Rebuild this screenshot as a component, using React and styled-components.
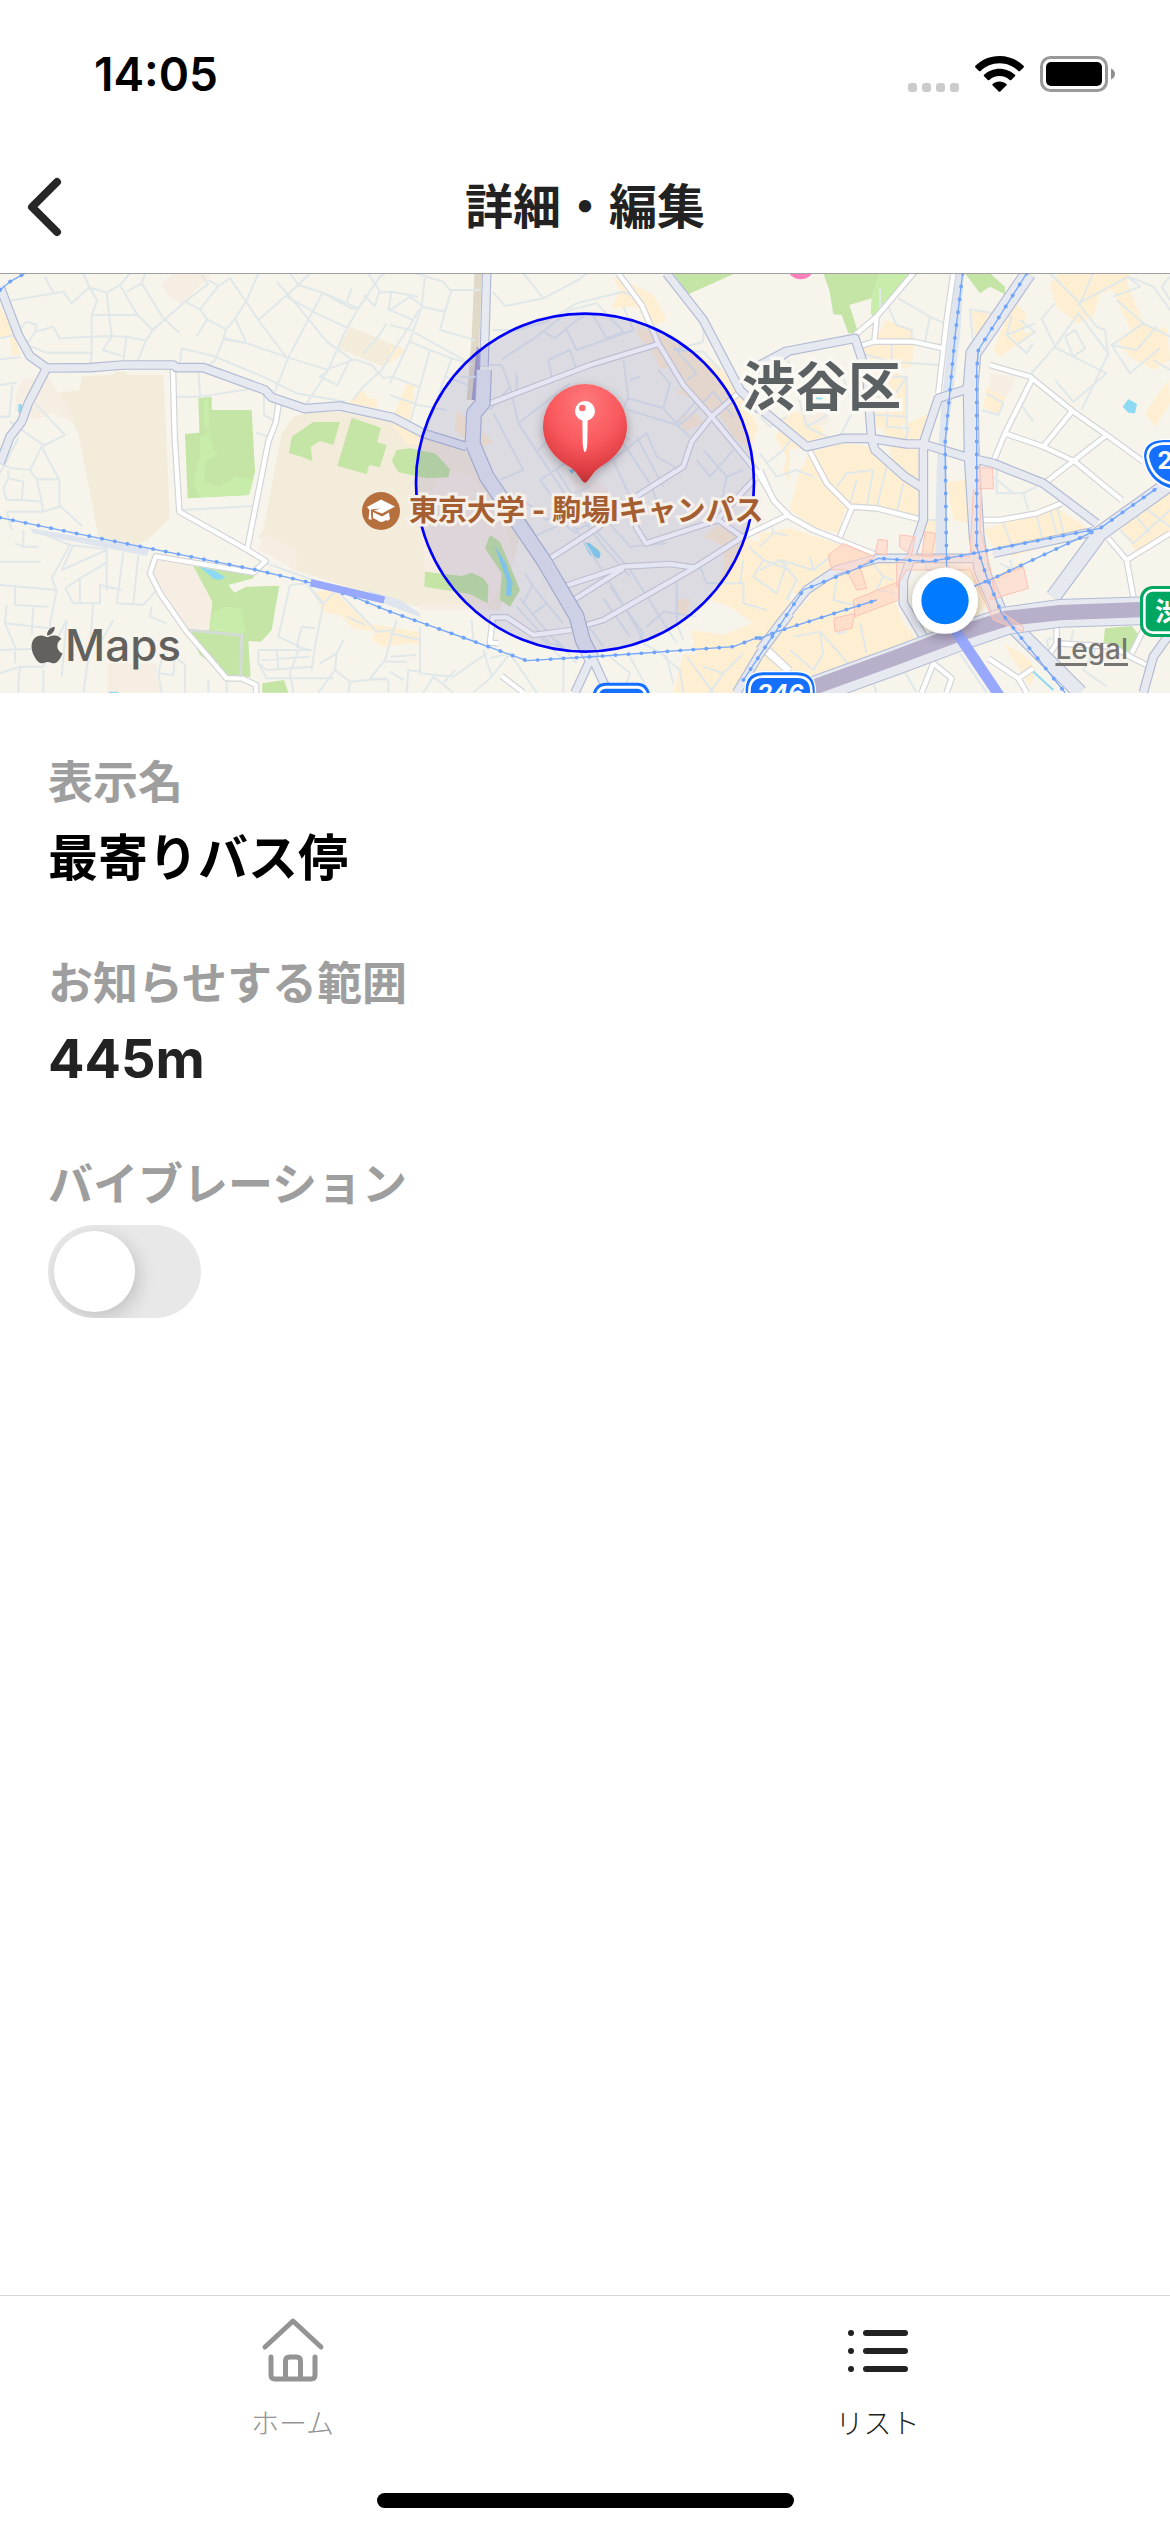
import React, { useState } from "react";
import styled, { createGlobalStyle } from "styled-components";
import { FaApple } from "react-icons/fa";

const GlobalStyle = createGlobalStyle`
  *, *::before, *::after { box-sizing: border-box; }
  body {
    margin: 0;
    background: #fff;
    color: #222;
    font-family: Inter, "Noto Sans CJK JP", sans-serif;
  }
`;

/* ---------- Layout ---------- */

const Screen = styled.div`
  display: flex;
  flex-direction: column;
  min-height: 100vh;
  background: #fff;
`;

const StatusBar = styled.div`
  display: flex;
  align-items: center;
  justify-content: space-between;
  height: 141px;
  padding: 6px 54px 0 94px;
`;

const Clock = styled.time`
  font-size: 46px;
  line-height: 60px;
  font-weight: 600;
  color: #000;
`;

const StatusIcons = styled.div`
  display: flex;
  align-items: flex-end;
  gap: 16px;
`;

const NavBar = styled.header`
  display: grid;
  grid-template-columns: 96px 1fr 96px;
  align-items: center;
  height: 133px;
  border-bottom: 1px solid #a0a0a2;
`;

const BackButton = styled.button`
  display: flex;
  align-items: center;
  height: 96px;
  padding: 0 24px;
  border: 0;
  background: none;
  color: #272727;
`;

const Title = styled.h1`
  margin: 0;
  font-size: 48px;
  line-height: 72px;
  font-weight: 700;
  text-align: center;
`;

const MapPanel = styled.section`
  position: relative;
  height: 419px;
  overflow: hidden;
  background: #f7f4eb;
`;

const MapCanvas = styled.svg`
  display: block;
  width: 100%;
  height: 100%;
`;

const MapLabel = styled.span`
  position: absolute;
  top: ${(p) => p.$top}px;
  left: ${(p) => p.$left}px;
  display: flex;
  align-items: center;
  font-size: ${(p) => p.$size}px;
  line-height: 60px;
  font-weight: ${(p) => p.$weight};
  color: ${(p) => p.$color};
  white-space: nowrap;
  paint-order: stroke;
  -webkit-text-stroke: ${(p) => p.$halo || "0"};
`;

const LegalLink = styled.a`
  position: absolute;
  right: 42px;
  bottom: 28px;
  font-size: 28px;
  line-height: 32px;
  font-weight: 500;
  color: #767571;
  text-decoration: underline;
  text-decoration-thickness: 3px;
  text-underline-offset: 4px;
`;

const Details = styled.main`
  display: flex;
  flex: 1;
  flex-direction: column;
  gap: 61px;
  padding: 60px 48px;
`;

const Field = styled.div`
  display: flex;
  flex-direction: column;
  align-items: flex-start;
  gap: 10px;
`;

const FieldLabel = styled.label`
  font-size: 45px;
  line-height: 60px;
  font-weight: 600;
  color: #9e9e9e;
`;

const FieldValue = styled.output`
  font-size: ${(p) => (p.$strong ? 50 : 54)}px;
  line-height: 70px;
  font-weight: 700;
  color: ${(p) => (p.$strong ? "#000" : "#222")};
`;

const Toggle = styled.input`
  appearance: none;
  display: flex;
  align-items: center;
  justify-content: ${(p) => (p.checked ? "flex-end" : "flex-start")};
  width: 153px;
  height: 93px;
  margin: 0;
  padding: 6px;
  border-radius: 47px;
  background: ${(p) => (p.checked ? "#34c759" : "#e8e8e8")};
  overflow: hidden;

  &::before {
    content: "";
    width: 81px;
    height: 81px;
    border-radius: 50%;
    background: #fff;
    box-shadow: 4px 6px 18px rgba(0, 0, 0, 0.16);
  }
`;

const TabBar = styled.nav`
  display: grid;
  grid-template-columns: 1fr 1fr;
  border-top: 1px solid #d8d8d8;
`;

const Tab = styled.a`
  display: flex;
  flex-direction: column;
  align-items: center;
  gap: 18px;
  height: 197px;
  padding-top: 18px;
  font-size: 28px;
  line-height: 40px;
  font-weight: 300;
  color: ${(p) => (p.$active ? "#222" : "#949494")};
  text-decoration: none;
`;

const HomeIndicator = styled.div`
  align-self: center;
  width: 417px;
  height: 15px;
  margin-bottom: 24px;
  border-radius: 8px;
  background: #000;
`;

/* ---------- Icons ---------- */

const SignalIcon = () => (
  <svg width="51" height="9" viewBox="0 0 51 9" fill="#cbcbcb" aria-hidden="true">
    {[0, 14, 28, 42].map((x) => (
      <rect key={x} x={x} width="9" height="9" rx="3" />
    ))}
  </svg>
);

const WifiIcon = () => (
  <svg width="49" height="36" viewBox="0 0 49 36" aria-hidden="true">
    <path
      fill="#000"
      d="M24.500 0C34 0 42.500 3.700 48.600 9.800Q49.300 10.600 48.600 11.400L45 15Q44.200 15.700 43.400 15C38.400 10.200 31.800 7.300 24.500 7.300S10.600 10.200 5.600 15Q4.800 15.700 4 15L.4 11.400Q-.3 10.600 .4 9.800C6.500 3.700 15 0 24.500 0ZM24.500 12.700C30.500 12.700 35.900 15 39.900 18.800Q40.600 19.500 39.900 20.300L36.200 24Q35.500 24.600 34.700 24C32 21.500 28.500 20 24.500 20S17 21.500 14.300 24Q13.500 24.600 12.800 24L9.100 20.300Q8.400 19.500 9.100 18.800C13.100 15 18.500 12.700 24.500 12.700ZM24.500 25.500C27.200 25.500 29.600 26.400 31.400 28Q32 28.700 31.300 29.400L25.300 35.400Q24.500 36 23.700 35.400L17.700 29.400Q17 28.700 17.600 28C19.400 26.400 21.800 25.500 24.500 25.500Z"
    />
  </svg>
);

const BatteryIcon = () => (
  <svg width="76" height="36" viewBox="0 0 76 36" aria-hidden="true">
    <rect x="1.500" y="1.500" width="65" height="33" rx="9" fill="none" stroke="#999" strokeWidth="3" />
    <rect x="6" y="6" width="56" height="24" rx="5" fill="#000" />
    <path d="M71 12.500Q75 14.500 75 18T71 23.500Z" fill="#8f8f8f" />
  </svg>
);

const BackIcon = () => (
  <svg width="42" height="60" viewBox="0 0 42 60" aria-hidden="true">
    <path d="M33 5L8 30L33 55" fill="none" stroke="currentColor" strokeWidth="8" strokeLinecap="round" strokeLinejoin="round" />
  </svg>
);

const HomeIcon = () => (
  <svg width="72" height="72" viewBox="0 0 72 72" fill="none" stroke="currentColor" strokeWidth="5" strokeLinecap="round" strokeLinejoin="round" aria-hidden="true">
    <path d="M8 33L36 7L64 33" />
    <path d="M14 43V61Q14 65 18 65H54Q58 65 58 61V43" />
    <path d="M28.500 64V47Q28.500 43 32.500 43H39.500Q43.500 43 43.500 47V64" />
  </svg>
);

const ListIcon = () => (
  <svg width="72" height="72" viewBox="0 0 72 72" stroke="currentColor" strokeWidth="6" strokeLinecap="round" aria-hidden="true">
    {[19, 37, 55].map((y) => (
      <path key={y} d={`M9 ${y}H9.010M24 ${y}H63`} />
    ))}
  </svg>
);

const CampusIcon = () => (
  <svg width="38" height="38" viewBox="0 0 38 38" aria-hidden="true">
    <circle cx="19" cy="19" r="19" fill="#b5703e" />
    <path d="M5 15L19 7.500L33 14.500L20 21.500L12 18.500L19 16.500L9 17.500V21.500L9.500 28L6.500 27L7.500 18Z" fill="#fff" />
    <path d="M11 20L20 24.500L27 20.500L28 27Q25 30 24 28Q19 32 15 28L11 26Z" fill="#fff" />
  </svg>
);

/* ---------- Map artwork ---------- */

const TAN = "#f4ecdb";
const ROSE = "#f7eee3";
const SHOP = "#feefd3";
const PARK = "#c4e5a5";
const LAWN = "#c8ecaa";
const WATER = "#8edaf4";
const TRACK = "#dee5ee";

const west = {
  x: 0,
  fills: [
    [TAN, "M245 318L340 314L345 305H378V314L490 315L510 745L445 808L400 828L295 800L235 490L175 368L238 360Z"],
    [TAN, "M880 440L920 430L1020 425L1180 458L1260 500L1400 545L1560 800L1500 1020L1260 1010L1200 1000L880 900L775 800L790 780L845 490Z"],
    [ROSE, "M790 790L890 840V900L775 840Z"],
    [TAN, "M1050 170L1220 240L1150 290L1015 235Z"],
    [ROSE, "M480 45L520 10H640L545 100L510 80Z"],
    [ROSE, "M70 325L145 320L220 440L215 455L160 430L110 450L45 420L50 370Z"],
    [ROSE, "M465 865L580 880L638 990L630 1080H555L450 920Z"],
    [ROSE, "M322 1180H470V1230L485 1268H322Z"],
    [SHOP, "M0 110L45 190L60 255H35L30 200H0Z"],
    [SHOP, "M1045 400L1085 357L1105 385L1135 388L1130 415Z"],
    [SHOP, "M1183 430L1220 340L1245 345L1225 470L1260 505V525H1225L1180 470Z"],
    [SHOP, "M945 965L1000 960L1100 1060L1255 1085V1115L1145 1130L1115 1110L1125 1085L1060 1075L1020 1035L965 1025Z"],
    [TRACK, "M90 775L240 800L450 835L440 858L300 830L100 790ZM1100 960L1200 990L1260 1030V1042L1150 1000Z"],
    [PARK, "M595 385L635 380V420H755L765 605L747 675L563 685L555 492L598 488Z"],
    [LAWN, "M600 500L628 485L640 540L690 570L655 550L615 580L612 635L655 650L695 630L700 620L760 628L747 675L600 682L578 640L600 560ZM612 390L625 385L628 480L612 470Z"],
    [PARK, "M875 500L940 456H1020L1000 525L960 513L933 530L937 574L910 562L867 550Z"],
    [PARK, "M1055 443L1143 473L1131 517L1160 525L1140 592L1107 585L1100 613L1012 587Z"],
    [PARK, "M580 888L690 905L765 912L760 925L685 945L703 968L740 950L838 947L815 1080L783 1115L745 1113L752 1220L690 1222L600 1155L565 1085L628 1080L637 995Z"],
    [LAWN, "M637 1025L680 1010L725 1015L735 1085L720 1092L630 1080Z"],
    [PARK, "M787 1240L852 1230L865 1268H787Z"],
    [WATER, "M598 890L640 900L676 922L660 930L640 926ZM55 403H66V430L55 428ZM327 1265H355V1270H327Z"],
  ],
  minor:
    "M30 92L190 65L215 100L268 52L320 68M135 20L160 68M268 52L250 10M268 52L292 92L275 135V260L268 290M275 135H412M320 68L335 200L308 240L365 258M320 68L360 45L390 10M360 45L410 132L458 180L438 212L412 275M380 65L425 40L490 145L538 188M425 40L435 10M458 180L555 95L600 118L622 148L590 198M555 95L625 42L605 15M600 118L655 48L690 25L735 90L775 150L865 270M655 48L625 30M622 148L678 178L705 145L740 92L775 10M678 178L670 208L645 272L622 288M705 145L740 220M670 208L742 220L862 262L980 298L1065 268L1115 285M742 220L670 205M775 150L895 45L930 10M895 45L968 68L1075 115L1140 20L1155 10M968 68L865 262L820 375M830 35L895 110L980 215L1055 268M860 80L950 130L1045 175M895 45L870 10M968 68L1052 115L1075 115M1075 115L1030 195L985 300L920 400M1090 75L1125 108L1138 62L1105 10M1138 68L1175 65L1255 80M1175 65L1165 118L1240 150L1255 120M1240 150L1185 235L1145 300L1090 350L1060 388M1160 160L1138 195L1090 250M1115 285L1150 325L1175 320L1255 350M985 300L960 320L1012 345L1050 270M1055 55L1040 95M40 195L80 155L110 165L105 185L160 170L178 205L330 198L380 200L440 212M105 185L80 225L140 248H272M380 200L370 270M0 268L60 262M0 205L45 195M545 235L540 280M545 235L640 258L800 325L890 370L1035 395M595 300L600 380H525M600 380L745 358M792 370V435L820 450M768 488L805 500M0 345L50 338M38 338L28 440H0M105 400L195 495L125 530L90 600L35 595L0 580M55 505L0 610M30 455L130 525M125 530L178 630V705L245 768M90 600L110 628H178M25 600V625L70 635L65 690H20L10 655L25 625M65 690L125 695L130 725H20L35 780M130 725L185 708M110 628L125 695M545 720L760 708M70 780V830H115M45 820L70 830M100 780L210 825L320 838V960M210 825L155 925L170 960L150 1060L155 1140M220 825L185 900L320 840M195 955L240 925L300 890L320 875M240 925V1000M195 955L220 1000H300V945L365 960M370 848L350 1000L430 1005M415 855L400 1000M0 875H122M0 945L170 960M45 945V1005L145 1010M20 1005L15 1060L150 1075M15 1060L45 1130V1180M0 1140L160 1135M0 1210L60 1190H130L200 1050M100 1010L95 1095M130 1200V1268M60 1190L55 1240V1268M280 1000L270 1130L250 1268M430 1005L470 960M455 1010L450 1040L500 1060M340 1050L300 1120M200 1050L185 1220M490 1150L475 1210L485 1268M475 1210L520 1215L525 1160L555 1185V1268M800 880L940 930M870 945L835 1100L900 1130M870 945L920 940L965 1000M920 940L970 1000L1010 960M905 1070L890 1130L930 1140M905 1070L945 1075M970 1000L945 1130L935 1200M1010 960L1130 1085L1180 1080M1095 1065L1040 1040M775 1140H935M775 1140V1180L800 1200L935 1190M830 1140L835 1200M785 1170L930 1160M775 1180L800 1225H1000M895 1140L870 1210L880 1268M1030 1110L1010 1150L960 1180M1010 1150L1005 1200L1050 1235L1160 1225M1005 1200L955 1268M1190 1050L1155 1170L1110 1225L1165 1230V1268M1155 1175H1220M680 1225V1268M625 1230V1268M1050 1235L1045 1268",
  arterial:
    "M0 50L55 195L90 258L140 294L270 293L370 285H520L530 293H610L795 360L815 382L915 416L1020 408L1180 443L1270 490L1400 530M140 294L85 400L65 455L30 500L0 580",
  wide: "",
  street:
    "M519 300L524 500L538 725L740 838L797 873L760 908L467 859L450 910L480 970L560 1085L680 1225H725L768 1245V1268M835 405L828 455L805 515L742 835",
  rail: "M0 60L30 35L75 10M0 743L300 805L760 898L930 938L1060 980L1170 1025",
};

const center = {
  x: 1170,
  fills: [
    [PARK, "M850 10H1035L895 73Z"],
    [SHOP, "M670 25L700 30L760 60L790 75L830 150L790 170L740 110L665 115L690 60Z"],
    [SHOP, "M740 170L800 190L900 240L1000 300L1050 370L1105 470L1080 540L1030 500L985 430L920 390L860 370L890 330L850 290L810 295L785 240L745 200Z"],
    [SHOP, "M865 440L920 430L940 460L880 485Z"],
    [SHOP, "M1155 500L1200 450V640L1180 600L1190 560Z"],
    [SHOP, "M940 800L985 765L1060 800L1140 830L1200 790V1268H850L880 1150L915 1155L905 1080L1000 1095L1090 1060L1020 1010L960 990L1000 900L1005 830Z"],
    [SHOP, "M860 990L900 985L890 1040L865 1030Z"],
    [SHOP, "M50 340L75 345L60 440L25 430ZM0 230L45 240L0 280ZM0 1080L85 1095V1125L0 1105ZM200 420L310 515L260 540L195 480Z"],
    ["#e0d9c8", "M253 10H275L268 230L245 390H230L245 200Z"],
    ["#a9a4cf", "M260 230L275 240L262 390H245Z"],
    ["#dfd6c6", "M395 730L430 780L470 860L552 990L530 1000L400 800Z"],
    [ROSE, "M175 600L250 620L350 780L370 870L290 1020H90V1005L295 1000V945L105 905L90 700Z"],
    [ROSE, "M530 610L580 640L640 635L658 680L580 690Z"],
    [PARK, "M20 540L60 535L135 550L180 597L175 622L110 625L25 607L5 572Z"],
    [PARK, "M300 795L330 815L390 960L360 1010L330 990L335 910L285 835Z"],
    [PARK, "M105 905L215 918L245 908L280 925L295 945L293 1000L240 972L103 950Z"],
    [PARK, "M590 815L628 840V860L600 850Z"],
    [WATER, "M313 825L345 875L368 940L363 978L348 976L350 930ZM580 818L600 820L632 850L628 866L600 855ZM537 600L560 595L545 612Z"],
  ],
  minor:
    "M75 10L160 35L180 60H272M105 20L95 110L60 210L0 340M95 110L165 125L185 60M165 125L150 180L255 210M0 165L60 180L150 230L240 280M60 215L120 240L185 265L165 320L110 480M120 240L95 330L60 460M185 265L250 285M210 320H260M165 320L235 345M0 375L85 405L170 420M0 120L60 80L100 110M308 65L345 108L460 85L565 30L590 10M400 10L440 60L460 85M308 180H380L470 155L560 100L700 65L755 90M335 268L440 200L540 120L620 100L700 185L650 205L605 130M460 185L495 205L560 150L600 130M530 180L560 240L730 180L700 110M475 270L540 240L560 300M475 270L485 320M700 270L715 380L690 440L620 600M720 330L750 320M300 285L335 285L360 350L385 460L450 560L530 680L640 830L720 920M380 310V370M360 350L300 420M310 430L400 600L330 630M385 460L540 340M440 545L545 440M715 385L820 415L840 340L805 300M820 415L860 460L920 390M715 420L860 465L900 500M640 590L770 490L800 560L870 600M700 520L780 640L800 690M740 500L820 650M660 550L720 680M620 440L720 510M500 600L600 760L720 900L860 1120M450 630L560 780L680 970L760 1110M400 690L470 750L560 700M430 800L520 760L560 790M530 680L600 650M560 780L640 740L720 830L830 820M450 630L540 570M940 540L1010 620L1060 600M920 570L960 620L1030 540M1010 620L985 740M860 470L900 440L970 365L1030 440M850 230L920 310L890 330M850 240L940 245L990 300M940 155V215L850 240M405 910L430 950L470 1000L520 1060M430 940L400 1000M390 985L450 1060L520 1140M470 1000L430 1030M380 1010L480 1120L520 1130M660 950L760 1090L740 1130M640 985L720 1100M600 1075L640 1130M770 1070L820 1025L920 1040M860 920V1060L880 1110M930 890L950 940H1060V1000L1130 1020M1060 870L1050 940M1075 830L1120 870L1200 900M1120 870L1090 920L1160 970L1190 880M820 1160L870 1200L880 1268M760 1120L830 1160L850 1240M720 1160L780 1268M90 1070V1210L190 1220L290 1150M50 1268L55 1200L90 1205M100 1268L130 1220L190 1268M0 1090L90 1110M0 1160L80 1155M195 1200L160 1240M245 1050L250 1110M280 1140L305 1220L250 1268M305 1220L360 1150L300 1165M360 1150L440 1268M450 1100L520 1170V1268M500 1110L560 1180M660 1160L720 1210L700 1268M890 1160L970 1268M940 1190L1000 1210L1060 1150M1000 1210L960 1268M0 1205L40 1230",
  arterial:
    "M290 10L282 290M830 10L940 150L1050 360L1110 420M1200 240L1165 265L1120 315L1080 340M605 1160L555 1268M605 1160L655 1268M1040 1268L1110 1150L1200 1030",
  wide: "M282 300L278 400L252 430L248 520L290 620L460 870L560 1040L578 1110L605 1165",
  street:
    "M685 10L755 105L805 220L880 345L965 440L1105 610L1155 695L1195 735L1060 800M300 400L600 285L805 222M1045 370L965 440L905 515L880 590L800 640L715 695L740 775L768 820L985 750L1055 800M985 745L1100 620M470 872L620 775L715 700M520 950L700 890L840 882L910 892M550 990L700 895M590 1065L640 1050L910 895L1060 800M545 1080L430 1095L350 1042H308L300 1118L325 1120M335 1218L400 1268M1125 1130L1200 1200",
  rail: "M0 1025L100 1060L240 1110L410 1172L640 1158L1030 1130L1110 1100",
};

const east = {
  x: 2280,
  fills: [
    [PARK, "M190 10H360L335 85L268 105L295 190H265L245 135L220 133L208 60Z"],
    [LAWN, "M360 10H475L345 145L332 130L335 85Z"],
    [PARK, "M615 10H690L735 50V73L690 50L660 70Z"],
    [SHOP, "M900 10H1110L1100 40L1150 160L1190 180L1220 170L1230 270L1180 300L1110 260L1075 215L1110 180L1060 60L1020 70L1000 140L950 160L890 110L870 45Z"],
    [SHOP, "M380 150L460 180L455 205H345Z"],
    [SHOP, "M300 225H460L455 290L400 300L440 330V460L400 480L345 470L340 280Z"],
    [SHOP, "M635 118L690 125L650 240Z"],
    [SHOP, "M760 95L800 130L790 190L825 185L720 260L700 240Z"],
    [SHOP, "M50 500L80 430L150 425L180 460L200 500L140 520L100 540Z"],
    [SHOP, "M120 600L150 545L250 520L330 530L400 600L475 660V740L350 715L260 700L210 640Z"],
    [SHOP, "M90 720L120 600L210 645L260 705L235 790L160 770Z"],
    [SHOP, "M340 380L475 530V640L400 580ZM440 460L510 430L490 510H440Z"],
    [SHOP, "M560 635L620 630L625 760L580 750ZM500 750H530L525 850L490 860Z"],
    [SHOP, "M0 790L90 775L350 860L420 870L400 980L430 1060L470 1110L350 1150L180 1220H0V1180L60 1080L150 980L60 960L0 850Z"],
    [SHOP, "M670 780L830 725L870 700L990 780L760 860L700 830Z"],
    [SHOP, "M1080 770L1230 660V790L1130 850Z"],
    [SHOP, "M680 350L740 380L710 435L670 410ZM1155 430L1225 330L1230 400L1185 470ZM730 1120L800 1160L830 1200L810 1250Z"],
    [SHOP, "M700 920L790 870L780 900L700 940ZM600 900L640 890L680 1000L640 1050Z"],
    [ROSE, "M690 310L770 320L740 380L690 360ZM135 420H205V465H140Z"],
    [TRACK, "M585 10H612L600 200L562 500L560 860H525L530 600L545 400Z"],
    [WATER, "M1088 410L1105 387L1131 402L1125 430L1105 428ZM163 378H187V388H163Z"],
    [PARK, "M1035 1075L1115 1068L1132 1090L1120 1150L1030 1120Z"],
  ],
  minor:
    "M360 55V140M415 85L510 140L555 160M510 140L495 215M380 100L410 165L455 180V205M300 250L395 275L540 285M395 215V275M310 320H440V480M345 435L440 440M385 380L380 470L445 475L435 520M345 380H400L440 320M85 270L140 470L220 510M240 290L280 420L240 500M140 470L210 430M0 550L50 620M20 580L70 540L100 500M50 620L110 600L160 620M0 440L30 470L80 440M230 650L260 610L340 600M290 630L270 700M340 600L320 710M380 590L350 710M430 640L410 730M0 830L40 790L80 795M40 790L30 750M0 900L60 870L160 900L210 860M60 870L110 930L80 990M160 900L150 860M230 930L220 990L300 1010M330 870L370 920L400 930M370 920L350 960L410 970M100 1100L180 1085L230 1140L270 1190M180 1085L190 1150L160 1200M230 1090L260 1085M90 1140L160 1200M300 1060L320 1150M630 118L755 140M630 118L640 225M755 140L740 195L800 250L820 220M780 150L825 185L770 225M740 195L825 160M885 100L845 145L885 230L810 315M885 230L955 130L1045 250L965 420M885 330L940 395L1040 310L880 230M955 100L1010 170L1035 180L1045 260M915 200L945 180L975 235L940 260L915 200M955 100L1105 20L1140 50L1060 80M1105 20L1180 50L1230 120M1070 90L1150 160L1230 200M1150 160L1055 225L1110 310L1200 235M1055 225L1130 240L1190 170M1000 10L960 100L920 60L870 10M680 370L730 400L715 435L665 420M780 400L820 455M1180 270L1230 300M1205 50L1230 90M1205 50L1230 20M700 620L760 670L790 670L830 650M710 600V670H790L805 720M830 735L850 820M870 720L890 790M730 760L760 840M890 700L910 790M1080 780L1120 820L1230 720M1130 740L1170 790M1150 710L1230 770M720 880L760 900L750 870M870 1150L860 1110L890 1100M940 1080L930 1130M1010 1130L970 1200L1040 1250M600 1150L680 1268M420 1180L470 1268M330 1215L350 1268M490 850L500 900H600M540 750H480",
  arterial:
    "M0 285L75 245L285 205L320 310L335 510L345 540L435 620L490 655M0 415L140 530L250 505H330L440 522H490L615 560L700 580L850 640L1010 760M490 510V750L450 870L430 930V1000L490 1100M490 520L535 385L620 358M0 1140L60 1060L140 960L230 900L355 865H640M700 850L1000 785M1230 1090L1180 1160L1150 1268",
  wide: "M805 10L640 250L632 350L635 560L650 800L665 900L720 1030L960 1268M1230 640L1020 790L880 980",
  street:
    "M460 10L350 140L285 195M580 10L560 150L535 370M350 145L343 215L300 228M343 215H460L550 235M690 285L810 320L940 425L1040 495L1150 575M815 330L735 490L700 575M735 490L850 530L945 575L1085 690M935 425L850 530M1040 495L860 635M670 750H720L830 730L905 700M150 545L200 640L270 710L350 715L480 748M275 715L240 800M0 600L40 690L85 738L160 780L350 855M1045 805L1100 870L1120 980M1100 870L1230 790M890 1070V1120L870 1150M890 1120L1060 1130L1110 1160L1180 1195M1150 1080L1115 1150M485 1268L520 1180L575 1225L560 1268M685 1165L775 1225L820 1195M775 1225L800 1268M0 1130L90 1210",
  rail:
    "M608 10L585 200L555 520L560 890M800 10L655 240L650 300V830L680 920L725 1030L915 1268M0 1105L50 1085L350 990M-50 1230L130 960L280 900L355 865L510 875L640 850L1020 775L1190 655M640 950L700 925L1000 785",
};

const tiles = [west, center, east];

const Lines = ({ kind, stroke, width, ...rest }) => (
  <g fill="none" stroke={stroke} strokeWidth={width} strokeLinejoin="round" {...rest}>
    {tiles.map((tile) => (
      <path key={tile.x} transform={`translate(${tile.x} 0)`} d={tile[kind]} />
    ))}
  </g>
);

const MapArtwork = () => (
  <MapCanvas viewBox="0 12 3510 1257" preserveAspectRatio="xMidYMid slice" aria-hidden="true">
    <defs>
      <radialGradient id="pinFill" cx="0.5" cy="0.2" r="0.85">
        <stop offset="0" stopColor="#ff7a7d" />
        <stop offset="0.5" stopColor="#f9585c" />
        <stop offset="0.8" stopColor="#dc3c42" />
        <stop offset="1" stopColor="#a92d33" />
      </radialGradient>
      <filter id="softShadow" x="-50%" y="-50%" width="200%" height="200%">
        <feDropShadow dx="0" dy="10" stdDeviation="16" floodColor="#000" floodOpacity="0.3" />
      </filter>
    </defs>

    {tiles.map((tile) => (
      <g key={tile.x} transform={`translate(${tile.x} 0)`}>
        {tile.fills.map(([fill, d]) => (
          <path key={d} fill={fill} d={d} />
        ))}
      </g>
    ))}

    <Lines kind="minor" stroke="#e0e8ea" width="6" />
    <Lines kind="street" stroke="#d3d4d8" width="20" />
    <Lines kind="street" stroke="#fff" width="13" />
    <Lines kind="arterial" stroke="#b2bbd4" width="29" />
    <Lines kind="wide" stroke="#b2bbd4" width="48" />
    <Lines kind="arterial" stroke="#e6e9f0" width="22" />
    <Lines kind="wide" stroke="#e6e9f0" width="41" />

    <g transform="translate(2280 0)" fill="none">
      <path d="M0 1330L160 1262L400 1175L600 1100L740 1052L900 1030L1160 1022" stroke="#b2bbd4" strokeWidth="86" />
      <path d="M0 1330L160 1262L400 1175L600 1100L740 1052L900 1030L1160 1022" stroke="#e6e9f0" strokeWidth="80" />
      <path d="M0 1320L160 1252L400 1165L600 1090L740 1045L900 1028L1160 1018" stroke="#b8afcb" strokeWidth="46" />
      <g fill="#ffd3c4" fillOpacity="0.6" stroke="#fbc3b5" strokeWidth="3">
        <path d="M205 855L250 820L345 860L300 890L320 955L290 960L260 900L215 900Z" />
        <path d="M345 850L355 808L383 812L380 855ZM420 795L465 800L455 855L418 830ZM495 785L527 790L515 860H485Z" />
        <path d="M280 990L415 935V990L285 1040ZM222 1045L285 1030L275 1075L225 1085Z" />
        <path d="M700 925L790 890L805 955L690 990ZM650 592L698 595L700 657L655 655Z" />
        <path d="M640 660L665 655L660 780L690 890L715 1020L790 1070V1085L700 1050L630 900H440L410 950V880L450 855L630 860Z" fillOpacity="0.45" />
      </g>
      <path d="M585 1080L720 1280" stroke="#98a8fc" strokeWidth="32" />
      <path d="M820 1205L880 1260" stroke={WATER} strokeWidth="6" />
      <circle cx="122" cy="-14" r="42" fill="#ff80b8" />
    </g>

    <Lines kind="rail" stroke="#78a9fa" width="4" />
    <Lines kind="rail" stroke="#6fa4fb" width="11" strokeLinecap="round" strokeDasharray="1 38" />
    <path d="M932 938L1153 990" stroke="#98a8fc" strokeWidth="22" />
    <path d="M565 1080L725 1096L722 1222" fill="none" stroke="#d5dcd6" strokeWidth="9" />

    {/* Notification radius */}
    <circle cx="1755" cy="638" r="507" fill="#000096" fillOpacity="0.1" stroke="#0000fa" strokeWidth="8" />

    {/* Route shields */}
    <g fontFamily="Inter, sans-serif" fontWeight="700" fill="#fff">
      <path d="M1775 1290Q1780 1238 1815 1238H1915Q1948 1238 1953 1290Z" fill="#1570ff" />
      <path d="M1788 1290Q1792 1252 1818 1252H1912Q1936 1252 1941 1290" fill="none" stroke="#fff" strokeWidth="9" />
      <path d="M2238 1290Q2222 1205 2290 1205H2390Q2458 1205 2444 1290Z" fill="#1570ff" stroke="#fff" strokeWidth="4" />
      <path d="M2251 1290Q2237 1220 2290 1220H2390Q2446 1220 2431 1290" fill="none" stroke="#fff" strokeWidth="8" />
      <text x="2341" y="1297" fontSize="72" fontStyle="italic" textAnchor="middle">246</text>
      <path d="M3430 560Q3430 510 3490 508H3600V660H3520Q3440 640 3430 560Z" fill="#1570ff" stroke="#fff" strokeWidth="4" />
      <path d="M3443 560Q3445 523 3490 521H3600V643H3525Q3455 630 3443 560Z" fill="none" stroke="#fff" strokeWidth="8" />
      <text x="3472" y="597" fontSize="72">246</text>
      <rect x="3420" y="948" width="200" height="153" rx="38" fill="#00a760" />
      <rect x="3433" y="961" width="200" height="127" rx="26" fill="none" stroke="#fff" strokeWidth="8" />
      <text x="3465" y="1052" fontSize="78" fontFamily="'Noto Sans CJK JP', sans-serif">渋谷</text>
    </g>

    {/* Current location */}
    <circle cx="2835" cy="992" r="99" fill="#fff" filter="url(#softShadow)" />
    <circle cx="2835" cy="992" r="71" fill="#007aff" />

    {/* Pin */}
    <g transform="translate(1170 0)">
      <path d="M585 342A126 126 0 0 1 711 468C711 525 675 565 632 590C610 600 595 638 585 638S560 600 538 590C495 565 459 525 459 468A126 126 0 0 1 585 342Z" fill="url(#pinFill)" filter="url(#softShadow)" />
      <path d="M577 445H593L592 520Q590 545 585 547Q580 545 578 520Z" fill="#fff" />
      <circle cx="585" cy="423" r="30" fill="#fff" />
      <circle cx="577" cy="414" r="10" fill="#fb6b6e" />
    </g>
  </MapCanvas>
);

const AppleMaps = styled(MapLabel)`
  gap: 2px;

  svg {
    width: 32px;
    height: 42px;
  }
`;

const Campus = styled(MapLabel)`
  gap: 9px;
`;

const StatusIconGroup = () => (
  <StatusIcons>
    <SignalIcon />
    <WifiIcon />
    <BatteryIcon />
  </StatusIcons>
);

export default function App() {
  const [vibrate, setVibrate] = useState(false);

  return (
    <Screen>
      <GlobalStyle />
      <StatusBar>
        <Clock>14:05</Clock>
        <StatusIconGroup />
      </StatusBar>

      <NavBar>
        <BackButton type="button" aria-label="戻る">
          <BackIcon />
        </BackButton>
        <Title>詳細・編集</Title>
      </NavBar>

      <MapPanel>
        <MapArtwork />
        <MapLabel $top={83} $left={742} $size={53} $weight={700} $color="#5b6062" $halo="7px #faf8f2">
          渋谷区
        </MapLabel>
        <Campus $top={207} $left={362} $size={29} $weight={700} $color="#a55e31" $halo="6px #f5f0ea">
          <CampusIcon />
          東京大学 - 駒場Iキャンパス
        </Campus>
        <AppleMaps $top={341} $left={31} $size={44} $weight={500} $color="#63615d">
          <FaApple aria-hidden="true" />
          Maps
        </AppleMaps>
        <LegalLink href="#legal">Legal</LegalLink>
      </MapPanel>

      <Details>
        <Field>
          <FieldLabel htmlFor="name">表示名</FieldLabel>
          <FieldValue id="name" $strong>
            最寄りバス停
          </FieldValue>
        </Field>
        <Field>
          <FieldLabel htmlFor="range">お知らせする範囲</FieldLabel>
          <FieldValue id="range">445m</FieldValue>
        </Field>
        <Field>
          <FieldLabel htmlFor="vibration">バイブレーション</FieldLabel>
          <Toggle
            id="vibration"
            type="checkbox"
            role="switch"
            checked={vibrate}
            onChange={(e) => setVibrate(e.target.checked)}
          />
        </Field>
      </Details>

      <TabBar>
        <Tab href="#home">
          <HomeIcon />
          ホーム
        </Tab>
        <Tab href="#list" $active aria-current="page">
          <ListIcon />
          リスト
        </Tab>
      </TabBar>
      <HomeIndicator />
    </Screen>
  );
}
